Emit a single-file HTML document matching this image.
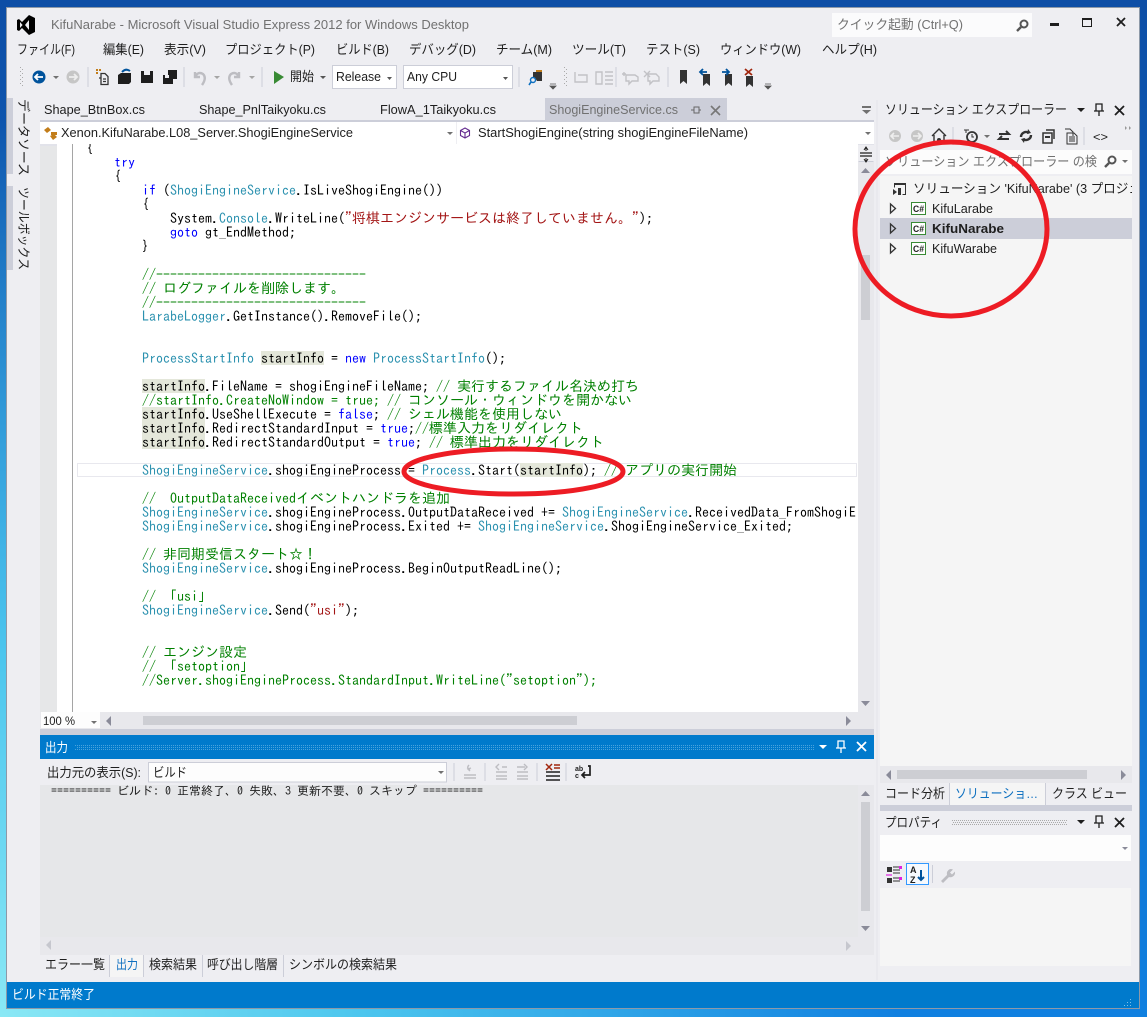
<!DOCTYPE html>
<html lang="ja"><head><meta charset="utf-8"><title>KifuNarabe</title>
<style>
html,body{margin:0;padding:0}
body{position:relative;width:1147px;height:1017px;overflow:hidden;background:radial-gradient(ellipse 900px 900px at 0 1017px,#8ae8f5 0%,#4cc6ee 40%,rgba(20,120,220,0) 100%),linear-gradient(#0d4ea6,#1080e0)}
svg{position:absolute;left:0;top:0}
svg text{font-family:"Liberation Sans","Noto Sans CJK JP",sans-serif;font-size:13px;fill:#1e1e1e;white-space:pre}
svg text.g{fill:#717171}
svg text.m{font-family:"IPAGothic","Liberation Mono",monospace;font-size:12px}
#code{position:absolute;left:57px;top:144px;width:800px;height:568px;overflow:hidden}
#code pre{position:absolute;left:29px;top:-3px;margin:0;font-family:"IPAGothic","Liberation Mono",monospace;font-size:14px;line-height:14px;color:#000}
#code i{font-style:normal}
.k{color:#00f}.t{color:#2b91af}.c{color:#008000}.s{color:#a31515}.h{background:#e4e7da}
#cur{position:absolute;left:20px;top:319px;width:778px;height:12px;border:1px solid #e8e8ee}
#gl{position:absolute;left:15px;top:0;width:1px;height:568px;background:#a5a5a5}
</style></head><body>
<svg width="1147" height="1017" viewBox="0 0 1147 1017">
<rect x="6.500" y="7.500" width="1133" height="1001" fill="#eeeef2" stroke="#8d99a8"/>
<path d="M29 15 35 18V32L29 35 22 28 19 31 17 30V20L19 19 22 22ZM20 22V28L22.600 25ZM29 20 25 25 29 30Z" fill="#000" fill-rule="evenodd"/>
<text x="51" y="29" class="g" textLength="418" lengthAdjust="spacingAndGlyphs">KifuNarabe - Microsoft Visual Studio Express 2012 for Windows Desktop</text>
<rect x="832" y="13" width="200" height="24" fill="#fbfbfc"/>
<text x="837" y="29" class="g" textLength="126" lengthAdjust="spacingAndGlyphs">クイック起動 (Ctrl+Q)</text>
<g fill="none" stroke="#555"><circle cx="1024" cy="24" r="3.500" stroke-width="2"/><path d="M1021 27 1017 31" stroke-width="2.400"/></g>
<path d="M1050 23h9v3h-9z" fill="#1e1e1e"/><path d="M1082.500 18.500h9v8h-9z" fill="none" stroke="#1e1e1e"/><path d="M1082 18h10v2h-10z" fill="#1e1e1e"/>
<path d="M1117 18 1125 26M1125 18 1117 26" stroke="#1e1e1e" stroke-width="1.800"/>
<g>
<text x="17" y="54" textLength="58" lengthAdjust="spacingAndGlyphs">ファイル(F)</text>
<text x="103" y="54" textLength="41" lengthAdjust="spacingAndGlyphs">編集(E)</text>
<text x="164" y="54" textLength="42" lengthAdjust="spacingAndGlyphs">表示(V)</text>
<text x="225" y="54" textLength="90" lengthAdjust="spacingAndGlyphs">プロジェクト(P)</text>
<text x="336" y="54" textLength="53" lengthAdjust="spacingAndGlyphs">ビルド(B)</text>
<text x="409" y="54" textLength="67" lengthAdjust="spacingAndGlyphs">デバッグ(D)</text>
<text x="496" y="54" textLength="56" lengthAdjust="spacingAndGlyphs">チーム(M)</text>
<text x="572" y="54" textLength="54" lengthAdjust="spacingAndGlyphs">ツール(T)</text>
<text x="646" y="54" textLength="54" lengthAdjust="spacingAndGlyphs">テスト(S)</text>
<text x="720" y="54" textLength="81" lengthAdjust="spacingAndGlyphs">ウィンドウ(W)</text>
<text x="822" y="54" textLength="55" lengthAdjust="spacingAndGlyphs">ヘルプ(H)</text>
</g>
<!-- toolbar -->
<g fill="#aaa"><path d="M20 67h1v1h-1zM22 69h1v1h-1zM20 71h1v1h-1zM22 73h1v1h-1zM20 75h1v1h-1zM22 77h1v1h-1zM20 79h1v1h-1zM22 81h1v1h-1zM20 83h1v1h-1zM22 85h1v1h-1zM564 67h1v1h-1zM566 69h1v1h-1zM564 71h1v1h-1zM566 73h1v1h-1zM564 75h1v1h-1zM566 77h1v1h-1zM564 79h1v1h-1zM566 81h1v1h-1zM564 83h1v1h-1zM566 85h1v1h-1z"/></g>
<circle cx="39" cy="77" r="6.500" fill="#00539c"/><path d="M35 77h8M38 74 35 77 38 80" stroke="#fff" stroke-width="1.800" fill="none"/>
<path d="M53 76h6l-3 3z" fill="#717171"/>
<circle cx="73" cy="77" r="6.500" fill="#c6c6c6"/><path d="M69 77h8M74 74 77 77 74 80" stroke="#eee" stroke-width="1.800" fill="none"/>
<path d="M88 67v20M184 67v20M262 67v20M519 67v20M616 67v20M668 67v20" stroke="#ccced8"/>
<g fill="none" stroke="#333" stroke-width="1.300"><path d="M101 73.500h4l3 3v8h-7zM99 78h2M103 79h3M103 81.500h3"/></g><path d="M96 69h2v2h-2zM99 69h2v2h-2zM96 72h2v2h-2z" fill="#c27d1a"/>
<path d="M118 75l3-2h10v9l-2 2h-11z" fill="#1e1e1e"/><path d="M122 72q4-4 8-1" stroke="#00539c" stroke-width="2" fill="none"/>
<path d="M141 71h12v12h-12z" fill="#1e1e1e"/><path d="M144 71h6v4h-6z" fill="#eeeef2"/>
<path d="M163 75h10v9h-10z" fill="#1e1e1e"/><path d="M168 70h9v9h-4v-4h-5z" fill="#1e1e1e"/><path d="M165 75h4v3h-4z" fill="#eeeef2"/>
<g fill="none" stroke="#bdbdc2" stroke-width="2.400"><path d="M195 72v5h5M195 77q3-6 8-3 4 4-1 11"/><path d="M239 72v5h-5M239 77q-3-6-8-3-4 4 1 11"/></g>
<path d="M214 76h6l-3 3zM249 76h6l-3 3z" fill="#a5a5a5"/>
<path d="M274 71 284 77 274 84z" fill="#388a34"/>
<text x="290" y="81" textLength="24" lengthAdjust="spacingAndGlyphs">開始</text>
<path d="M320 76h6l-3 3z" fill="#555"/>
<rect x="332.500" y="65.500" width="64" height="23" fill="#fff" stroke="#ccced8"/>
<text x="336" y="81" textLength="45" lengthAdjust="spacingAndGlyphs">Release</text><path d="M387 77h5l-2.500 3z" fill="#555"/>
<rect x="403.500" y="65.500" width="109" height="23" fill="#fff" stroke="#ccced8"/>
<text x="407" y="81" textLength="50" lengthAdjust="spacingAndGlyphs">Any CPU</text><path d="M503 77h5l-2.500 3z" fill="#555"/>
<path d="M533 72h9v9h-5l-2-3h-2z" fill="#333"/><circle cx="533" cy="80" r="2.500" fill="none" stroke="#0e70c0" stroke-width="1.400"/><path d="M531 82l-2 3" stroke="#0e70c0" stroke-width="1.600"/><path d="M536 70h6v2h-6z" fill="#c27d1a"/>
<path d="M550 84h6M550 86h6l-3 3z" stroke="#555" fill="#555" stroke-width=".8"/>
<path d="M765 84h6M765 86h6l-3 3z" stroke="#555" fill="#555" stroke-width=".8"/>
<g fill="none" stroke="#c2c2c6" stroke-width="1.400"><path d="M575 72v10h12v-7h-9"/><path d="M596 72h6v12h-6zM605 72h8M605 76h8M605 80h8M605 84h8"/><path d="M626 75h9l3 2v4h-6l-3 3v-3h-3zM622 74h4M624 72v4"/><path d="M648 74h8l3 3v4h-6l-3 3v-3h-2zM644 71l6 6M650 71l-6 6"/></g>
<g fill="#333"><path d="M680 70h7v14l-3.500-3-3.500 3zM703 74h7v12l-3.500-3-3.500 3zM725 74h7v12l-3.500-3-3.500 3zM746 76h7v11l-3.500-3-3.500 3z"/></g>
<path d="M700 72h7M703 69 700 72 703 75" stroke="#00539c" stroke-width="1.800" fill="none"/>
<path d="M722 72h7M726 69 729 72 726 75" stroke="#00539c" stroke-width="1.800" fill="none"/>
<path d="M745 69 752 75M752 69 745 75" stroke="#a1260d" stroke-width="1.800"/>
<!-- side tabs -->
<path d="M7 98h6v76H7zM7 186h6v84H7z" fill="#ccced9"/>
<text transform="translate(19 99) rotate(90)" textLength="77" lengthAdjust="spacingAndGlyphs">データソース</text>
<text transform="translate(19 187) rotate(90)" textLength="83" lengthAdjust="spacingAndGlyphs">ツールボックス</text>
<!-- doc tabs -->
<text x="44" y="114" textLength="101" lengthAdjust="spacingAndGlyphs">Shape_BtnBox.cs</text>
<text x="199" y="114" textLength="127" lengthAdjust="spacingAndGlyphs">Shape_PnlTaikyoku.cs</text>
<text x="380" y="114" textLength="116" lengthAdjust="spacingAndGlyphs">FlowA_1Taikyoku.cs</text>
<rect x="545" y="98" width="182" height="22" fill="#ccced9"/>
<text x="549" y="114" class="g" textLength="129" lengthAdjust="spacingAndGlyphs">ShogiEngineService.cs</text>
<path d="M691 110h3M694 107h5v6h-5zM699 110h2" stroke="#666" fill="none"/>
<path d="M711 106 720 115M720 106 711 115" stroke="#777" stroke-width="1.600"/>
<path d="M862 106h9v2h-9zM862 110h9l-4.500 4z" fill="#717171"/>
<rect x="40" y="120" width="834" height="2" fill="#ccced9"/>
<rect x="40" y="122" width="416" height="22" fill="#fff"/><rect x="457" y="122" width="417" height="22" fill="#fff"/>
<rect x="40" y="144" width="834" height="2" fill="#e2e3ea"/>
<g fill="#c27d1a"><path d="M44 130l4-3 3 3-4 3zM51 132h6v3h-6zM50 136l4-2 3 3-4 3z"/></g>
<text x="61" y="137" textLength="292" lengthAdjust="spacingAndGlyphs">Xenon.KifuNarabe.L08_Server.ShogiEngineService</text>
<path d="M447 132h6l-3 3z" fill="#717171"/>
<path d="M465 128l4.500 2.500v5L465 138l-4.500-2.500v-5zM460.500 130.500 465 133l4.500-2.500M465 133v5" fill="none" stroke="#652d90" stroke-width="1.100"/>
<text x="478" y="137" textLength="270" lengthAdjust="spacingAndGlyphs">StartShogiEngine(string shogiEngineFileName)</text>
<path d="M865 132h6l-3 3z" fill="#717171"/>
<!-- editor frame -->
<rect x="40" y="146" width="17" height="566" fill="#e6e7e8"/><rect x="57" y="144" width="801" height="568" fill="#fff"/>
<rect x="858" y="146" width="16" height="566" fill="#e8e8ec"/>
<path d="M858 145h16v17h-16z" fill="#eeeef2"/><path d="M858.500 161.500h15" stroke="#ccced8"/>
<path d="M860 153h12M860 156h12" stroke="#1e1e1e" stroke-width="1.200"/><path d="M866 147v4M864 150l2-3 2 3M866 158v4M864 159l2 3 2-3" stroke="#1e1e1e" fill="none"/>
<path d="M861 173h9l-4.500-5z" fill="#8a8b99"/><rect x="861" y="255" width="9" height="65" fill="#cdced3"/><path d="M861 701h9l-4.500 5z" fill="#8a8b99"/>
<path d="M876 100h2v880h-2z" fill="#e9e9ee"/>
<rect x="40" y="712" width="834" height="17" fill="#e8e8ec"/>
<rect x="41" y="712" width="59" height="16" fill="#fdfdfd"/>
<text x="43" y="725" style="font-size:12px" textLength="32" lengthAdjust="spacingAndGlyphs">100 %</text>
<path d="M91 721h6l-3 3z" fill="#717171"/>
<path d="M111 716v10l-5-5z" fill="#8a8b99"/><rect x="143" y="716" width="434" height="9" fill="#cdced3"/><path d="M846 716v10l5-5z" fill="#8a8b99"/>
<rect x="40" y="729" width="834" height="6" fill="#ccced9"/>
<rect x="40" y="735" width="834" height="24" fill="#007acc"/>
<text x="45" y="752" style="fill:#fff" textLength="23" lengthAdjust="spacingAndGlyphs">出力</text>
<path d="M75 745.500H815M77 747.500H815M75 749.500H815" stroke="#4aa3dd" stroke-dasharray="1 1"/>
<path d="M819 745h8l-4 4z" fill="#fff"/>
<path d="M838 741h6v7h-6zM836 748h10M841 748v5" fill="none" stroke="#fff" stroke-width="1.300"/>
<path d="M857 742 866 751M866 742 857 751" stroke="#fff" stroke-width="1.800"/>
<!-- output toolbar -->
<text x="47" y="777" textLength="94" lengthAdjust="spacingAndGlyphs">出力元の表示(S):</text>
<rect x="148.500" y="762.500" width="298" height="19.500" fill="#fdfdfd" stroke="#ccced8"/>
<text x="153" y="777" textLength="34" lengthAdjust="spacingAndGlyphs">ビルド</text>
<path d="M438 771h6l-3 3z" fill="#717171"/>
<path d="M454 763v18M485 763v18M537 763v18M566 763v18" stroke="#ccced8"/>
<g stroke="#bdbdc2" stroke-width="1.400" fill="none"><path d="M464 778h12M464 775h12M469 765q-3 3 1 5M470 771l-2-2 3-1"/><path d="M496 772h11M496 776h11M496 779h11M502 767h5M499 764l-3 3 3 3"/><path d="M517 772h11M517 776h11M517 779h11M517 767h8M524 764l3 3-3 3"/></g>
<path d="M546 772h14M546 776h14M546 780h14" stroke="#1e1e1e" stroke-width="1.600"/><path d="M546 764 552 770M552 764 546 770M554 765h6M554 768h6" stroke="#a1260d" stroke-width="1.500"/>
<text x="575" y="771" style="font-size:7px;font-weight:bold">ab</text><text x="575" y="778" style="font-size:7px;font-weight:bold">c</text>
<path d="M588 766h2v9h-8M585 772l-3 3 3 3" fill="none" stroke="#1e1e1e" stroke-width="1.700"/>
<rect x="40" y="785" width="818" height="152" fill="#e6e7e9"/>
<rect x="858" y="785" width="16" height="152" fill="#e8e8ec"/>
<path d="M861 796h9l-4.500-5z" fill="#8a8b99"/><rect x="861" y="802" width="9" height="109" fill="#cdced3"/><path d="M861 926h9l-4.500 5z" fill="#8a8b99"/>
<text x="51" y="795" class="m">========== ビルド: 0 正常終了、0 失敗、3 更新不要、0 スキップ ==========</text>
<rect x="40" y="937" width="834" height="18" fill="#e8e8ec"/>
<path d="M51 940v10l-5-5z" fill="#c6c7ce"/><path d="M846 941v10l5-5z" fill="#c6c7ce"/>
<!-- bottom tabs -->
<rect x="110" y="955" width="33" height="22" fill="#f5f5f5"/>
<path d="M109.500 955v22M143.500 955v22M202.500 955v22M283.500 955v22" stroke="#ccced8"/>
<g>
<text x="45" y="969" textLength="60" lengthAdjust="spacingAndGlyphs">エラー一覧</text>
<text x="116" y="969" style="fill:#0e70c0" textLength="22" lengthAdjust="spacingAndGlyphs">出力</text>
<text x="149" y="969" textLength="48" lengthAdjust="spacingAndGlyphs">検索結果</text>
<text x="207" y="969" textLength="71" lengthAdjust="spacingAndGlyphs">呼び出し階層</text>
<text x="289" y="969" textLength="108" lengthAdjust="spacingAndGlyphs">シンボルの検索結果</text>
</g>
<rect x="7" y="982" width="1132" height="26" fill="#007acc"/>
<text x="12" y="999" style="fill:#fff" textLength="83" lengthAdjust="spacingAndGlyphs">ビルド正常終了</text>
<path d="M1130 1005h1v1h-1zM1127 1005h1v1h-1zM1124 1005h1v1h-1zM1130 1002h1v1h-1zM1127 1002h1v1h-1zM1130 999h1v1h-1z" fill="#7fc0ea"/>
<!-- right panel -->
<text x="885" y="114" textLength="182" lengthAdjust="spacingAndGlyphs">ソリューション エクスプローラー</text>
<path d="M1077 108h8l-4 4z" fill="#1e1e1e"/>
<path d="M1096 104h6v7h-6zM1094 111h10M1099 111v5" fill="none" stroke="#1e1e1e" stroke-width="1.300"/>
<path d="M1115 106 1124 115M1124 106 1115 115" stroke="#1e1e1e" stroke-width="1.800"/>
<circle cx="895" cy="136" r="6" fill="#c6c6c6"/><path d="M891 136h8M894 133 891 136 894 139" stroke="#eee" stroke-width="1.600" fill="none"/>
<circle cx="917" cy="136" r="6" fill="#c6c6c6"/><path d="M913 136h8M918 133 921 136 918 139" stroke="#eee" stroke-width="1.600" fill="none"/>
<path d="M932 136l7-7 7 7M934 135v7h10v-7" fill="none" stroke="#333" stroke-width="1.400"/><circle cx="939" cy="140" r="2" fill="#333"/>
<path d="M953 127v18M1084 127v18" stroke="#ccced8"/>
<circle cx="972" cy="137" r="5" fill="none" stroke="#333" stroke-width="1.800"/><path d="M972 134v3h2M964 130h5M966 130v3" stroke="#333" fill="none"/>
<path d="M984 135h6l-3 3z" fill="#717171"/>
<path d="M999 134h10M1006 131l3 3-3 0M1009 139H999M1002 136l-3 3 3 0" fill="none" stroke="#333" stroke-width="2"/>
<path d="M1021 137a5 5 0 0 1 8-4M1031 135a5 5 0 0 1-8 4" fill="none" stroke="#333" stroke-width="2.400"/><path d="M1028 129l3 4-4 1zM1024 143l-3-4 4-1z" fill="#333"/>
<path d="M1043 133h9v10h-9zM1046 130h8v9" fill="none" stroke="#333" stroke-width="1.500"/><path d="M1045 137h5" stroke="#333" stroke-width="2"/>
<path d="M1065 129h5l3 3v4M1067 133h7l3 3v8h-10zM1069 137h6M1069 139h6M1069 141h6" fill="none" stroke="#333"/>
<text x="1093" y="141" style="font-size:12px" textLength="15" lengthAdjust="spacingAndGlyphs">&lt;&gt;</text>
<path d="M1125 126l2 2-2 2zM1129 126l2 2-2 2z" fill="#999"/>
<rect x="880" y="150" width="252" height="24" fill="#fcfcfc"/>
<text x="885" y="166" class="g" textLength="212" lengthAdjust="spacingAndGlyphs">ソリューション エクスプローラー の検</text>
<circle cx="1112" cy="160" r="3.500" fill="none" stroke="#555" stroke-width="2"/><path d="M1109 163 1105 167" stroke="#555" stroke-width="2.400"/>
<path d="M1122 160h6l-3 3z" fill="#717171"/>
<rect x="880" y="176" width="252" height="590" fill="#f5f5f5"/>
<path d="M894.500 183.500h11v11h-3M894.500 183.500v4" fill="none" stroke="#333"/><path d="M894 183h12v2h-12z" fill="#333"/><path d="M893 189l4 3-4 3zM898 188h3v7h-3z" fill="#333"/>
<svg x="880" y="176" width="252" height="30"><text x="33" y="17" textLength="228" lengthAdjust="spacingAndGlyphs">ソリューション 'KifuNarabe' (3 プロジェ</text></svg>
<rect x="880" y="218" width="252" height="21" fill="#ccced9"/>
<g fill="#fff" stroke="#333"><path d="M890.500 204v9l5-4.500zM890.500 224v9l5-4.500zM890.500 244v9l5-4.500z" fill="none" stroke-width="1.300"/></g>
<g fill="#fff" stroke="#388a34"><rect x="911.500" y="202.500" width="14" height="12"/><rect x="911.500" y="222.500" width="14" height="12"/><rect x="911.500" y="242.500" width="14" height="12"/></g>
<g><text x="913" y="212" style="font-size:9px;font-weight:bold" textLength="11" lengthAdjust="spacingAndGlyphs">C#</text><text x="913" y="232" style="font-size:9px;font-weight:bold" textLength="11" lengthAdjust="spacingAndGlyphs">C#</text><text x="913" y="252" style="font-size:9px;font-weight:bold" textLength="11" lengthAdjust="spacingAndGlyphs">C#</text></g>
<text x="932" y="213" textLength="61" lengthAdjust="spacingAndGlyphs">KifuLarabe</text>
<text x="932" y="233" style="font-weight:bold" textLength="72" lengthAdjust="spacingAndGlyphs">KifuNarabe</text>
<text x="932" y="253" textLength="65" lengthAdjust="spacingAndGlyphs">KifuWarabe</text>
<rect x="880" y="766" width="252" height="17" fill="#e8e8ec"/>
<path d="M891 770v10l-5-5z" fill="#8a8b99"/><rect x="897" y="770" width="190" height="9" fill="#cdced3"/><path d="M1121 770v10l5-5z" fill="#8a8b99"/>
<rect x="950" y="783" width="95" height="22" fill="#f5f5f5"/>
<path d="M949.500 783v22M1045.500 783v22" stroke="#ccced8"/>
<text x="885" y="798" textLength="60" lengthAdjust="spacingAndGlyphs">コード分析</text>
<text x="955" y="798" style="fill:#0e70c0" textLength="83" lengthAdjust="spacingAndGlyphs">ソリューショ…</text>
<text x="1052" y="798" textLength="75" lengthAdjust="spacingAndGlyphs">クラス ビュー</text>
<rect x="880" y="805" width="252" height="6" fill="#ccced9"/>
<text x="885" y="827" textLength="57" lengthAdjust="spacingAndGlyphs">プロパティ</text>
<path d="M952 820.500H1067M953 822.500H1067M952 824.500H1067" stroke="#aaa" stroke-dasharray="1 1"/>
<path d="M1077 820h8l-4 4z" fill="#1e1e1e"/>
<path d="M1096 816h6v7h-6zM1094 823h10M1099 823v5" fill="none" stroke="#1e1e1e" stroke-width="1.300"/>
<path d="M1115 818 1124 827M1124 818 1115 827" stroke="#1e1e1e" stroke-width="1.800"/>
<rect x="880" y="835" width="251" height="26" fill="#fdfdfd"/>
<path d="M1122 847h6l-3 3z" fill="#8a8b99"/>
<rect x="880" y="861" width="251" height="27" fill="#eeeef2"/>
<rect x="880" y="888" width="251" height="78" fill="#f5f5f5"/>
<path d="M887 867h5v5h-5zM887 878h5v5h-5z" fill="#333"/><path d="M893 867h7M893 870h7M893 873h7M893 878h7M893 881h7" stroke="#333"/><path d="M886 875h6" stroke="#e040e0" stroke-width="1.400"/><path d="M899 866h3v3h-3zM899 877h3v3h-3z" fill="#e020e0"/>
<rect x="906.500" y="863.500" width="22" height="21" fill="#f6f9fd" stroke="#3399ff"/>
<text x="910" y="873" style="font-size:9px;font-weight:bold">A</text><text x="910" y="883" style="font-size:9px;font-weight:bold">Z</text>
<path d="M921 870v10M918 877l3 3 3-3" fill="none" stroke="#00539c" stroke-width="2"/>
<path d="M932.500 865v18" stroke="#ccced8"/>
<path d="M941 881l6-6q-1-4 3-6 2 0 3 .5l-3 3 2 2 3-3q.5 4-3 5.500-2 .5-3 0l-6 6z" fill="#bdbdc2"/>
</svg>
<div id="code"><div id="gl"></div><div id="cur"></div>
<pre>{
    <i class="k">try</i>
    {
        <i class="k">if</i> (<i class="t">ShogiEngineService</i>.IsLiveShogiEngine())
        {
            System.<i class="t">Console</i>.WriteLine(<i class="s">"将棋エンジンサービスは終了していません。"</i>);
            <i class="k">goto</i> gt_EndMethod;
        }

        <i class="c">//------------------------------</i>
        <i class="c">// ログファイルを削除します。</i>
        <i class="c">//------------------------------</i>
        <i class="t">LarabeLogger</i>.GetInstance().RemoveFile();


        <i class="t">ProcessStartInfo</i> <i class="h">startInfo</i> = <i class="k">new</i> <i class="t">ProcessStartInfo</i>();

        <i class="h">startInfo</i>.FileName = shogiEngineFileName; <i class="c">// 実行するファイル名決め打ち</i>
        <i class="c">//startInfo.CreateNoWindow = true; // コンソール・ウィンドウを開かない</i>
        <i class="h">startInfo</i>.UseShellExecute = <i class="k">false</i>; <i class="c">// シェル機能を使用しない</i>
        <i class="h">startInfo</i>.RedirectStandardInput = <i class="k">true</i>;<i class="c">//標準入力をリダイレクト</i>
        <i class="h">startInfo</i>.RedirectStandardOutput = <i class="k">true</i>; <i class="c">// 標準出力をリダイレクト</i>

        <i class="t">ShogiEngineService</i>.shogiEngineProcess = <i class="t">Process</i>.Start(<i class="h">startInfo</i>); <i class="c">// アプリの実行開始</i>

        <i class="c">//  OutputDataReceivedイベントハンドラを追加</i>
        <i class="t">ShogiEngineService</i>.shogiEngineProcess.OutputDataReceived += <i class="t">ShogiEngineService</i>.ReceivedData_FromShogiEngine;
        <i class="t">ShogiEngineService</i>.shogiEngineProcess.Exited += <i class="t">ShogiEngineService</i>.ShogiEngineService_Exited;

        <i class="c">// 非同期受信スタート☆！</i>
        <i class="t">ShogiEngineService</i>.shogiEngineProcess.BeginOutputReadLine();

        <i class="c">// 「usi」</i>
        <i class="t">ShogiEngineService</i>.Send(<i class="s">"usi"</i>);


        <i class="c">// エンジン設定</i>
        <i class="c">// 「setoption」</i>
        <i class="c">//Server.shogiEngineProcess.StandardInput.WriteLine("setoption");</i>
</pre></div>
<svg width="1147" height="1017" viewBox="0 0 1147 1017" style="pointer-events:none">
<ellipse cx="951" cy="229" rx="96" ry="87" fill="none" stroke="#ed1c24" stroke-width="5"/>
<ellipse cx="513.500" cy="471.500" rx="109.500" ry="22.500" fill="none" stroke="#ed1c24" stroke-width="5"/>
</svg>
</body></html>
